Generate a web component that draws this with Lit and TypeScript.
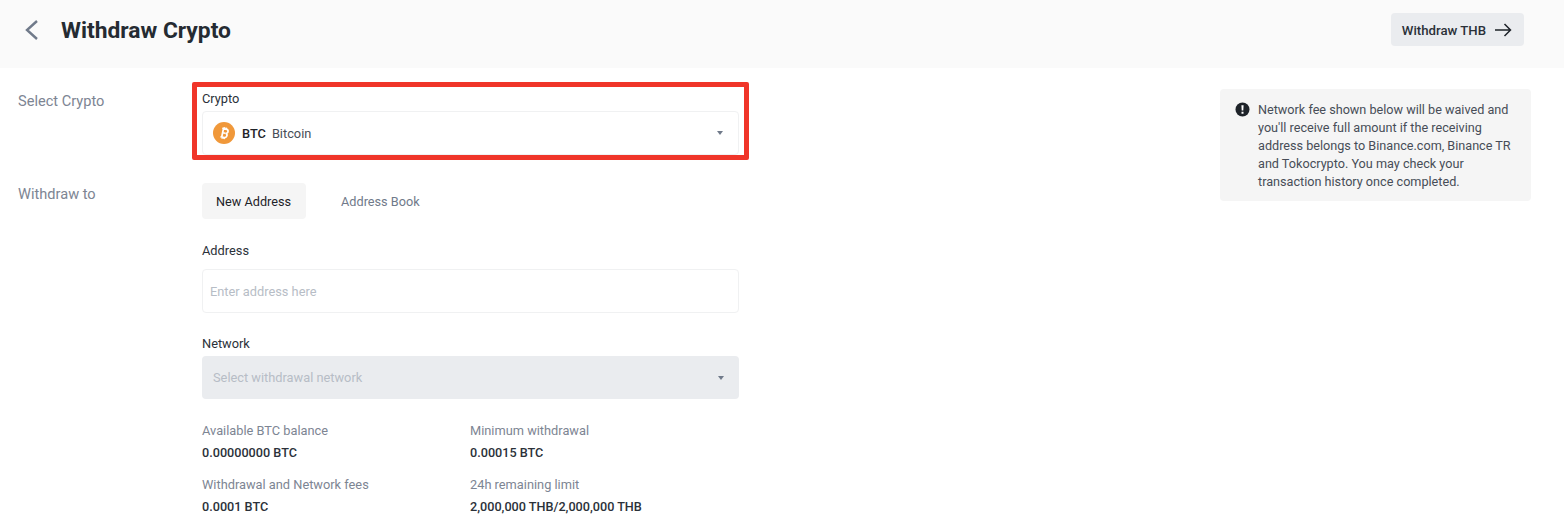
import { LitElement, html, css } from "lit";
import { customElement } from "lit/decorators.js";

@customElement("app-root")
export class AppRoot extends LitElement {
  static styles = css`
    :host {
      display: block;
      width: 1564px;
      height: 532px;
      overflow: hidden;
      background: #fff;
      font-family: Roboto, "Liberation Sans", sans-serif;
      color: #1e2329;
    }

    .header {
      display: flex;
      align-items: center;
      height: 68px;
      padding: 0 40px 9px 24px;
      box-sizing: border-box;
      background: #fafafa;
    }
    .back {
      width: 16px;
      height: 22px;
      margin-right: 21px;
    }
    h1 {
      flex: 1;
      margin: 1px 0 0;
      font-size: 22.8px;
      font-weight: 700;
      color: #252b32;
    }
    .thb {
      display: flex;
      align-items: center;
      gap: 8px;
      height: 33px;
      box-sizing: border-box;
      padding: 1px 12px 0 11px;
      border-radius: 4px;
      background: #eaecef;
      font-size: 13.2px;
      font-weight: 500;
      color: #2b3139;
    }

    .main {
      display: flex;
      padding: 21px 33px 0 18px;
    }
    .form {
      width: 537px;
    }
    .row {
      display: flex;
    }
    .row-label {
      width: 184px;
      font-size: 14.6px;
      line-height: 22px;
      color: #7d8593;
    }
    .crypto-row {
      height: 94px;
    }
    .crypto-row .row-label {
      padding-top: 1px;
    }

    .field-label {
      display: block;
      font-size: 12.8px;
      line-height: 18px;
      margin-bottom: 9px;
      color: #2b3139;
    }
    .crypto-field {
      position: relative;
      padding-top: 1px;
    }
    .crypto-field .field-label {
      margin-bottom: 3px;
    }
    .network-label {
      margin-bottom: 3px;
    }
    .highlight {
      position: absolute;
      left: -10px;
      top: -7px;
      width: 557px;
      height: 78px;
      box-sizing: border-box;
      border: 5px solid #f03529;
      border-radius: 2px;
      pointer-events: none;
    }
    .select,
    .input {
      display: flex;
      align-items: center;
      box-sizing: border-box;
      height: 44px;
      border: 1px solid #f0f1f2;
      border-radius: 4px;
      font-size: 12.8px;
    }
    .select {
      justify-content: space-between;
      padding: 0 15px 0 10px;
    }
    .coin {
      display: flex;
      align-items: center;
    }
    .coin svg {
      margin-right: 7px;
    }
    .coin b {
      font-weight: 500;
      margin-right: 6px;
    }
    .coin span {
      color: #474d57;
    }
    .caret {
      width: 0;
      height: 0;
      border-left: 3.5px solid transparent;
      border-right: 3.5px solid transparent;
      border-top: 4px solid #707a8a;
    }
    .input {
      padding: 0 7px;
      color: #b7bdc6;
    }
    .disabled {
      height: 43px;
      border: none;
      padding-left: 11px;
      background: #eaecef;
      color: #b7bdc6;
    }

    .tabs {
      display: flex;
      gap: 35px;
      font-size: 12.7px;
      margin-bottom: 23px;
    }
    .tab {
      height: 36px;
      line-height: 37px;
      color: #707a8a;
    }
    .tab.active {
      padding: 0 15px 0 14px;
      border-radius: 4px;
      background: #f5f5f5;
      color: #1e2329;
    }
    .group {
      margin-bottom: 22px;
    }
    .stats {
      display: grid;
      grid-template-columns: 268px 1fr;
      row-gap: 14px;
      margin-top: 23px;
    }
    .stat-label {
      font-size: 12.8px;
      line-height: 18px;
      color: #7d8593;
    }
    .stat-value {
      margin-top: 4px;
      font-size: 12.65px;
      line-height: 18px;
      font-weight: 500;
      color: #2b3139;
    }

    .notice {
      display: flex;
      gap: 8px;
      width: 311px;
      height: 112px;
      box-sizing: border-box;
      margin-left: auto;
      padding: 12px 14px 12px 15px;
      border-radius: 4px;
      background: #f5f5f5;
      font-size: 12.65px;
      line-height: 18px;
      color: #474d57;
    }
    .notice svg {
      flex: none;
      margin-top: 1px;
    }
    .notice p {
      margin: 0;
    }
  `;

  render() {
    return html`
      <div class="header">
        <svg class="back" viewBox="0 0 16 22" fill="none" stroke="#707a8a" stroke-width="2.4">
          <path d="M13 2 L3 11 L13 20"></path>
        </svg>
        <h1>Withdraw Crypto</h1>
        <div class="thb">
          Withdraw THB
          <svg width="18" height="14" viewBox="0 0 18 14" fill="none" stroke="#1e2329" stroke-width="1.5">
            <path d="M1 7 H16 M10.5 1 L16.5 7 L10.5 13"></path>
          </svg>
        </div>
      </div>
      <div class="main">
        <div>
          <div class="row crypto-row">
            <div class="row-label">Select Crypto</div>
            <div class="form crypto-field">
              <div class="highlight"></div>
              <span class="field-label">Crypto</span>
              <div class="select">
                <div class="coin">
                  <svg width="22" height="22" viewBox="0 0 22 22">
                    <circle cx="11" cy="11" r="11" fill="#f0983a"></circle>
                    <path
                      d="M8.3 6.7h3.9a2.1 2.1 0 0 1 .6 4.2 2.3 2.3 0 0 1-.6 4.5H8.3M9.6 6.7v8.7M9.6 11h2.8M10.2 5.2v1.5M12.2 5.2v1.5M10.2 15.4v1.5M12.2 15.4v1.5"
                      fill="none"
                      stroke="#fff"
                      stroke-width="1.7"
                      transform="rotate(12 11 11)"
                    ></path>
                  </svg>
                  <b>BTC</b><span>Bitcoin</span>
                </div>
                <i class="caret"></i>
              </div>
            </div>
          </div>
          <div class="row">
            <div class="row-label">Withdraw to</div>
            <div class="form">
              <div class="tabs">
                <div class="tab active">New Address</div>
                <div class="tab">Address Book</div>
              </div>
              <div class="group">
                <span class="field-label">Address</span>
                <div class="input">Enter address here</div>
              </div>
              <div>
                <span class="field-label network-label">Network</span>
                <div class="select disabled">
                  Select withdrawal network
                  <i class="caret"></i>
                </div>
              </div>
              <div class="stats">
                <div>
                  <div class="stat-label">Available BTC balance</div>
                  <div class="stat-value">0.00000000 BTC</div>
                </div>
                <div>
                  <div class="stat-label">Minimum withdrawal</div>
                  <div class="stat-value">0.00015 BTC</div>
                </div>
                <div>
                  <div class="stat-label">Withdrawal and Network fees</div>
                  <div class="stat-value">0.0001 BTC</div>
                </div>
                <div>
                  <div class="stat-label">24h remaining limit</div>
                  <div class="stat-value">2,000,000 THB/2,000,000 THB</div>
                </div>
              </div>
            </div>
          </div>
        </div>
        <div class="notice">
          <svg width="15" height="15" viewBox="0 0 15 15">
            <circle cx="7.5" cy="7.5" r="7" fill="#1e2329"></circle>
            <path d="M6.4 3.2h2.2l-.3 5.4H6.7zM6.5 9.8h2v2h-2z" fill="#fff"></path>
          </svg>
          <p>
            Network fee shown below will be waived and you'll receive full amount if the receiving address
            belongs to Binance.com, Binance TR and Tokocrypto. You may check your transaction history once
            completed.
          </p>
        </div>
      </div>
    `;
  }
}
